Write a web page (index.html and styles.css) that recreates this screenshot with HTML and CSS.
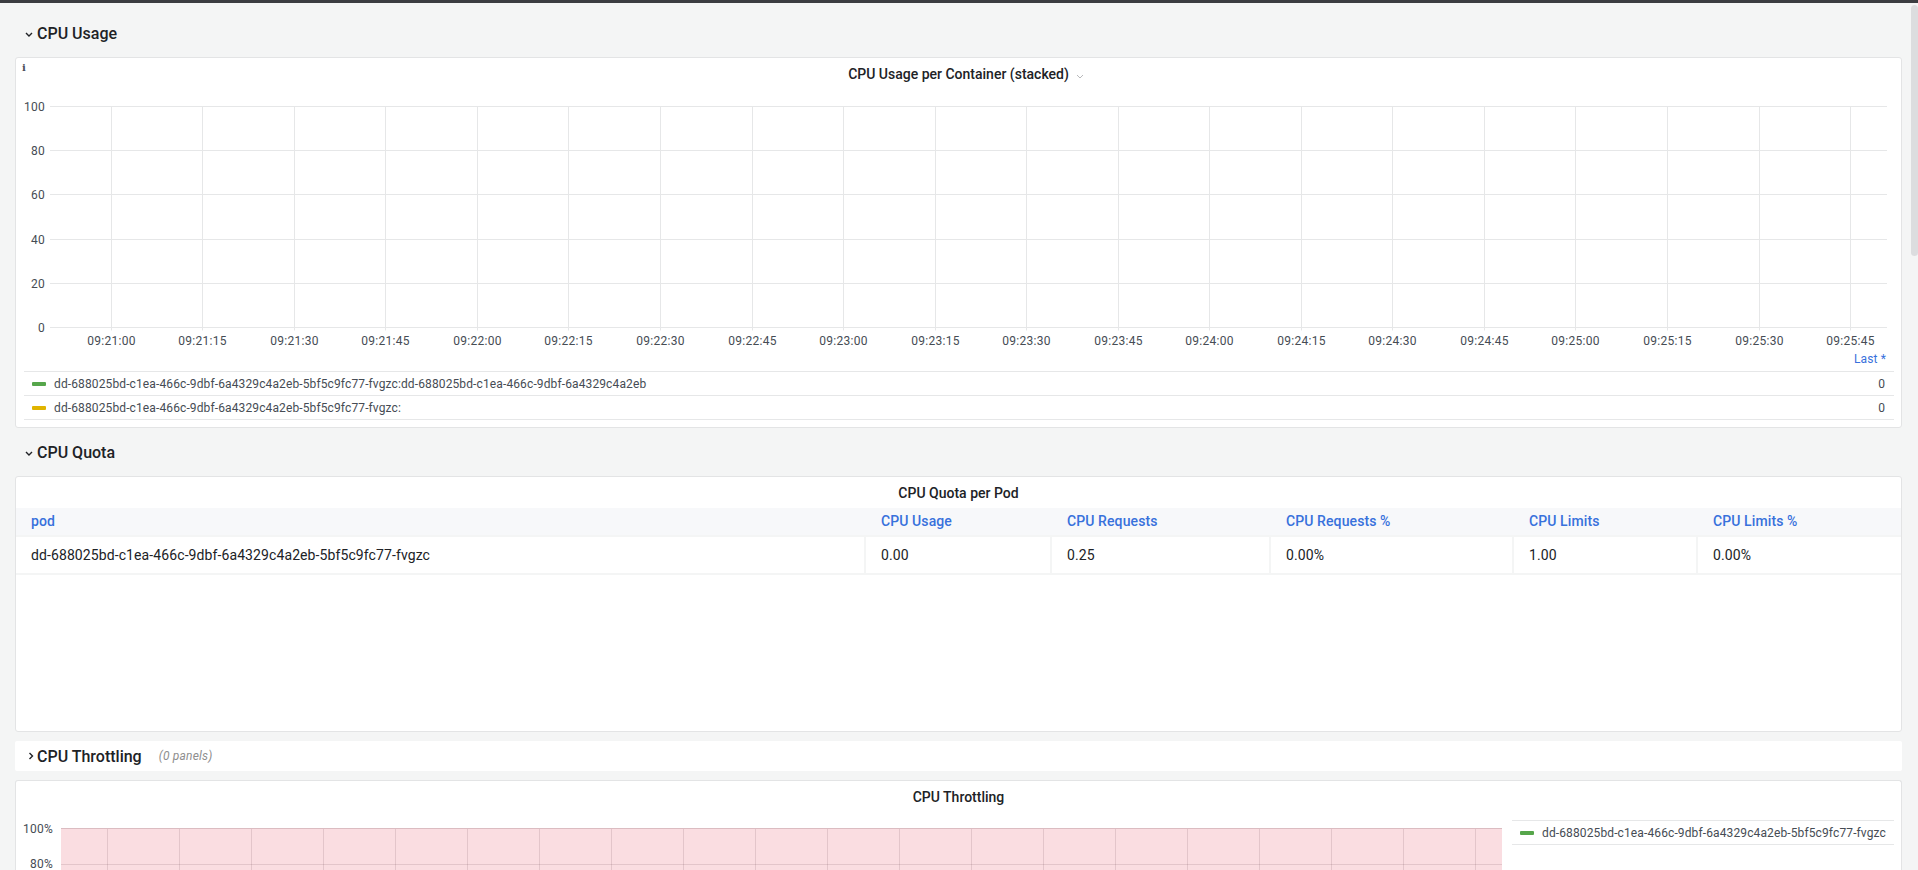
FILE: index.html
```html
<!DOCTYPE html>
<html lang="en">
<head>
<meta charset="utf-8">
<title>CPU Dashboard</title>
<link rel="stylesheet" href="styles.css">
</head>
<body>
<div class="topbar"></div>
<div class="shell">
  <main class="dash">
    <div class="row-title">
      <svg class="chev-down" width="8" height="5" viewBox="0 0 8 5"><path d="M1 1 L4 4 L7 1" fill="none" stroke="#202226" stroke-width="1.4"/></svg>
      <span>CPU Usage</span>
    </div>

    <section class="panel panel-usage">
      <span class="info-corner">i</span>
      <header class="panel-header">
        <h2 class="panel-title">CPU Usage per Container (stacked)<svg class="title-menu" width="8" height="5" viewBox="0 0 8 5"><path d="M1 1 L4 4 L7 1" fill="none" stroke="#b8b9bb" stroke-width="1"/></svg></h2>
      </header>
      <svg class="graph" width="1885" height="259" viewBox="0 0 1885 259">
        <g class="grid">
          <line x1="34" y1="17.5" x2="1871" y2="17.5"/>
          <line x1="34" y1="61.5" x2="1871" y2="61.5"/>
          <line x1="34" y1="105.5" x2="1871" y2="105.5"/>
          <line x1="34" y1="150.5" x2="1871" y2="150.5"/>
          <line x1="34" y1="194.5" x2="1871" y2="194.5"/>
          <line x1="34" y1="238.5" x2="1871" y2="238.5"/>
          <line x1="95.5" y1="17.5" x2="95.5" y2="241.5"/>
          <line x1="186.5" y1="17.5" x2="186.5" y2="241.5"/>
          <line x1="278.5" y1="17.5" x2="278.5" y2="241.5"/>
          <line x1="369.5" y1="17.5" x2="369.5" y2="241.5"/>
          <line x1="461.5" y1="17.5" x2="461.5" y2="241.5"/>
          <line x1="552.5" y1="17.5" x2="552.5" y2="241.5"/>
          <line x1="644.5" y1="17.5" x2="644.5" y2="241.5"/>
          <line x1="736.5" y1="17.5" x2="736.5" y2="241.5"/>
          <line x1="827.5" y1="17.5" x2="827.5" y2="241.5"/>
          <line x1="919.5" y1="17.5" x2="919.5" y2="241.5"/>
          <line x1="1010.5" y1="17.5" x2="1010.5" y2="241.5"/>
          <line x1="1102.5" y1="17.5" x2="1102.5" y2="241.5"/>
          <line x1="1193.5" y1="17.5" x2="1193.5" y2="241.5"/>
          <line x1="1285.5" y1="17.5" x2="1285.5" y2="241.5"/>
          <line x1="1376.5" y1="17.5" x2="1376.5" y2="241.5"/>
          <line x1="1468.5" y1="17.5" x2="1468.5" y2="241.5"/>
          <line x1="1559.5" y1="17.5" x2="1559.5" y2="241.5"/>
          <line x1="1651.5" y1="17.5" x2="1651.5" y2="241.5"/>
          <line x1="1743.5" y1="17.5" x2="1743.5" y2="241.5"/>
          <line x1="1834.5" y1="17.5" x2="1834.5" y2="241.5"/>
        </g>
        <g class="axis-y">
          <text x="29" y="17.5">100</text>
          <text x="29" y="61.5">80</text>
          <text x="29" y="105.5">60</text>
          <text x="29" y="150.5">40</text>
          <text x="29" y="194.5">20</text>
          <text x="29" y="238.5">0</text>
        </g>
        <g class="axis-x">
          <text x="95.5" y="252">09:21:00</text>
          <text x="186.5" y="252">09:21:15</text>
          <text x="278.5" y="252">09:21:30</text>
          <text x="369.5" y="252">09:21:45</text>
          <text x="461.5" y="252">09:22:00</text>
          <text x="552.5" y="252">09:22:15</text>
          <text x="644.5" y="252">09:22:30</text>
          <text x="736.5" y="252">09:22:45</text>
          <text x="827.5" y="252">09:23:00</text>
          <text x="919.5" y="252">09:23:15</text>
          <text x="1010.5" y="252">09:23:30</text>
          <text x="1102.5" y="252">09:23:45</text>
          <text x="1193.5" y="252">09:24:00</text>
          <text x="1285.5" y="252">09:24:15</text>
          <text x="1376.5" y="252">09:24:30</text>
          <text x="1468.5" y="252">09:24:45</text>
          <text x="1559.5" y="252">09:25:00</text>
          <text x="1651.5" y="252">09:25:15</text>
          <text x="1743.5" y="252">09:25:30</text>
          <text x="1834.5" y="252">09:25:45</text>
        </g>
      </svg>
      <div class="legend">
        <div class="legend-head">Last *</div>
        <div class="legend-row">
          <span class="swatch swatch-green"></span>
          <span class="legend-name">dd-688025bd-c1ea-466c-9dbf-6a4329c4a2eb-5bf5c9fc77-fvgzc:dd-688025bd-c1ea-466c-9dbf-6a4329c4a2eb</span>
          <span class="legend-value">0</span>
        </div>
        <div class="legend-row legend-row-last">
          <span class="swatch swatch-yellow"></span>
          <span class="legend-name">dd-688025bd-c1ea-466c-9dbf-6a4329c4a2eb-5bf5c9fc77-fvgzc:</span>
          <span class="legend-value">0</span>
        </div>
      </div>
    </section>

    <div class="row-title">
      <svg class="chev-down" width="8" height="5" viewBox="0 0 8 5"><path d="M1 1 L4 4 L7 1" fill="none" stroke="#202226" stroke-width="1.4"/></svg>
      <span>CPU Quota</span>
    </div>

    <section class="panel panel-quota">
      <header class="panel-header">
        <h2 class="panel-title">CPU Quota per Pod</h2>
      </header>
      <div class="qtable">
        <div class="qrow qhead">
          <div class="qcell">pod</div>
          <div class="qcell">CPU Usage</div>
          <div class="qcell">CPU Requests</div>
          <div class="qcell">CPU Requests %</div>
          <div class="qcell">CPU Limits</div>
          <div class="qcell">CPU Limits %</div>
        </div>
        <div class="qrow qdata">
          <div class="qcell">dd-688025bd-c1ea-466c-9dbf-6a4329c4a2eb-5bf5c9fc77-fvgzc</div>
          <div class="qcell">0.00</div>
          <div class="qcell">0.25</div>
          <div class="qcell">0.00%</div>
          <div class="qcell">1.00</div>
          <div class="qcell">0.00%</div>
        </div>
      </div>
    </section>

    <div class="row-title collapsed">
      <svg class="chev-right" width="6" height="8" viewBox="0 0 6 8"><path d="M1.5 1 L4.5 4 L1.5 7" fill="none" stroke="#202226" stroke-width="1.4"/></svg>
      <span>CPU Throttling</span>
      <span class="row-count">(0 panels)</span>
    </div>

    <section class="panel panel-throttle">
      <header class="panel-header">
        <h2 class="panel-title">CPU Throttling</h2>
      </header>
      <div class="throttle-body">
        <svg class="graph" width="1488" height="58" viewBox="0 0 1488 58">
          <rect class="threshold" x="45" y="16.5" width="1441" height="42"/>
          <g class="grid grid-red">
            <line x1="45" y1="52.5" x2="1486" y2="52.5"/>
            <line x1="91.5" y1="16.5" x2="91.5" y2="58"/>
            <line x1="163.5" y1="16.5" x2="163.5" y2="58"/>
            <line x1="235.5" y1="16.5" x2="235.5" y2="58"/>
            <line x1="307.5" y1="16.5" x2="307.5" y2="58"/>
            <line x1="379.5" y1="16.5" x2="379.5" y2="58"/>
            <line x1="451.5" y1="16.5" x2="451.5" y2="58"/>
            <line x1="523.5" y1="16.5" x2="523.5" y2="58"/>
            <line x1="595.5" y1="16.5" x2="595.5" y2="58"/>
            <line x1="667.5" y1="16.5" x2="667.5" y2="58"/>
            <line x1="739.5" y1="16.5" x2="739.5" y2="58"/>
            <line x1="811.5" y1="16.5" x2="811.5" y2="58"/>
            <line x1="883.5" y1="16.5" x2="883.5" y2="58"/>
            <line x1="955.5" y1="16.5" x2="955.5" y2="58"/>
            <line x1="1027.5" y1="16.5" x2="1027.5" y2="58"/>
            <line x1="1099.5" y1="16.5" x2="1099.5" y2="58"/>
            <line x1="1171.5" y1="16.5" x2="1171.5" y2="58"/>
            <line x1="1243.5" y1="16.5" x2="1243.5" y2="58"/>
            <line x1="1315.5" y1="16.5" x2="1315.5" y2="58"/>
            <line x1="1387.5" y1="16.5" x2="1387.5" y2="58"/>
            <line x1="1459.5" y1="16.5" x2="1459.5" y2="58"/>
          </g>
          <line class="threshold-top" x1="45" y1="16.5" x2="1486" y2="16.5"/>
          <g class="axis-y">
            <text x="37" y="16.5">100%</text>
            <text x="37" y="51.5">80%</text>
          </g>
        </svg>
        <div class="legend legend-side">
          <div class="legend-row legend-row-last">
            <span class="swatch swatch-green"></span>
            <span class="legend-name">dd-688025bd-c1ea-466c-9dbf-6a4329c4a2eb-5bf5c9fc77-fvgzc</span>
          </div>
        </div>
      </div>
    </section>
  </main>
  <div class="scrollbar"><div class="thumb"></div></div>
</div>
</body>
</html>
```

FILE: styles.css
```css
* {
  box-sizing: border-box;
}

html,
body {
  margin: 0;
  height: 870px;
  overflow: hidden;
}

body {
  background: #f4f5f5;
  font-family: Roboto, "Liberation Sans", Arial, sans-serif;
  color: #464c54;
}

.topbar {
  height: 3px;
  background: #3b3d41;
}

.shell {
  display: flex;
  height: 867px;
}

.dash {
  flex: 1;
  min-width: 0;
  padding: 15px 0 0 15px;
  display: flex;
  flex-direction: column;
  gap: 9px;
  overflow: hidden;
}

.scrollbar {
  width: 16px;
  flex: none;
  padding: 2px 0 0 9px;
}

.thumb {
  width: 7px;
  height: 251px;
  background: #dcdddf;
  border-radius: 4px;
}

/* Row headers */
.row-title {
  flex: none;
  height: 30px;
  display: flex;
  align-items: center;
  padding-left: 10px;
  gap: 4px;
  font-size: 16px;
  font-weight: 500;
  color: #202226;
}

.chev-down {
  margin-top: 3px;
}

.row-title.collapsed {
  background: #fff;
  border-radius: 2px;
  padding-left: 13px;
  gap: 3px;
}

.row-count {
  margin-left: 14px;
  font-size: 12px;
  font-style: italic;
  font-weight: 400;
  letter-spacing: 0.2px;
  color: #8e8e8e;
}

/* Panels */
.panel {
  flex: none;
  position: relative;
  background: #fff;
  border: 1px solid #e3e4e5;
  border-radius: 3px;
}

.panel-usage {
  height: 371px;
}

.panel-quota {
  height: 256px;
}

.panel-throttle {
  height: 120px;
  border-bottom: none;
  border-radius: 3px 3px 0 0;
}

.info-corner {
  position: absolute;
  left: 6px;
  top: 4px;
  font-family: "DejaVu Serif", "Liberation Serif", serif;
  font-weight: 700;
  font-size: 10px;
  color: #4a4e57;
}

.panel-header {
  height: 31px;
  display: flex;
  justify-content: center;
  align-items: center;
}

.panel-title {
  position: relative;
  margin: 0;
  font-size: 14px;
  font-weight: 500;
  color: #202226;
}

.title-menu {
  position: absolute;
  left: calc(100% + 7px);
  top: 8px;
}

/* Graphs */
.graph {
  display: block;
  flex: none;
}

.grid line {
  stroke: #e6e7e8;
  stroke-width: 1;
}

.grid-red line {
  stroke: rgba(90, 60, 65, 0.14);
}

.threshold {
  fill: #fadde1;
}

.threshold-top {
  stroke: #dbbcc1;
  stroke-width: 1;
}

.graph text {
  font-family: Roboto, "Liberation Sans", Arial, sans-serif;
  font-size: 12px;
  fill: #464c54;
  letter-spacing: 0.25px;
  dominant-baseline: central;
}

.axis-y text {
  text-anchor: end;
}

.axis-x text {
  text-anchor: middle;
}

/* Legends */
.legend {
  margin: 0 7px 0 8px;
  font-size: 12px;
  letter-spacing: 0.12px;
}

.legend-head {
  height: 23px;
  line-height: 23px;
  text-align: right;
  padding-right: 8px;
  color: #3871dc;
}

.legend-row {
  height: 24px;
  display: flex;
  align-items: center;
  padding: 0 9px 0 8px;
  border-top: 1px solid #e6e7e8;
  color: #464c54;
}

.legend-row-last {
  height: 25px;
  border-bottom: 1px solid #e6e7e8;
}

.swatch {
  width: 14px;
  height: 4px;
  margin-right: 8px;
  border-radius: 1px;
  flex: none;
}

.swatch-green {
  background: #56a64b;
}

.swatch-yellow {
  background: #e0b400;
}

.legend-name {
  flex: 1;
  white-space: nowrap;
}

.legend-value {
  flex: none;
}

.throttle-body {
  display: flex;
  align-items: flex-start;
}

.legend-side {
  width: 382px;
  margin: 8px 0 0 8px;
  flex: none;
}

/* Quota table */
.qtable {
  font-size: 14px;
  letter-spacing: 0.1px;
}

.qrow {
  display: grid;
  grid-template-columns: 848px 186px 219px 243px 184px 205px;
}

.qcell {
  padding-left: 15px;
  white-space: nowrap;
  overflow: hidden;
}

.qcell + .qcell {
  border-left: 2px solid transparent;
}

.qhead .qcell {
  height: 27px;
  line-height: 27px;
  background: #f7f8fa;
  color: #3871dc;
  font-weight: 500;
}

.qdata .qcell {
  height: 40px;
  line-height: 36px;
  border-top: 2px solid #f4f5f5;
  border-bottom: 2px solid #f4f5f5;
  color: #202226;
}

.qdata .qcell + .qcell {
  border-left-color: #f4f5f5;
}
```
